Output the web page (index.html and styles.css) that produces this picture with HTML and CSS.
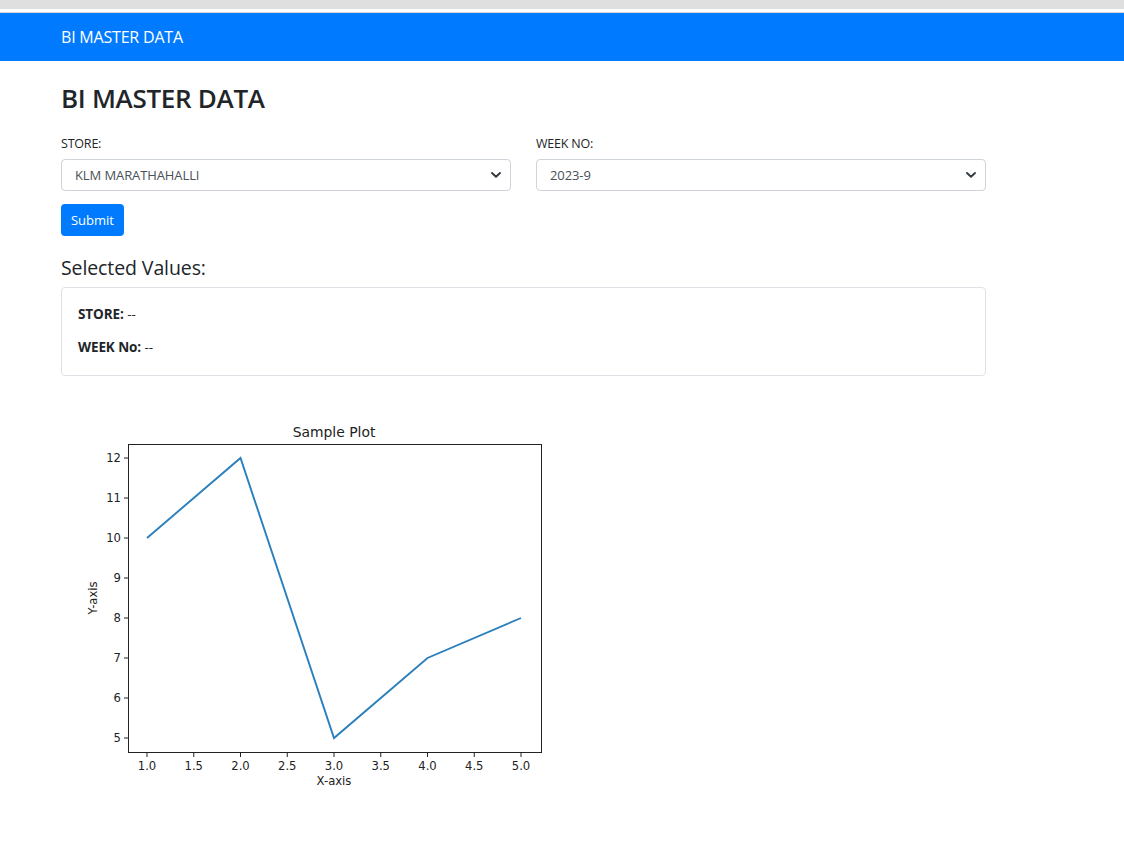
FILE: index.html
```html
<!DOCTYPE html>
<html>
<head>
<meta charset="utf-8">
<title>BI MASTER DATA</title>
<link rel="stylesheet" href="styles.css">
</head>
<body>
<div class="topstrip"></div>
<div class="topgap"></div>
<nav class="navbar"><span class="brand">BI MASTER DATA</span></nav>
<main class="container">
  <h1 class="title">BI MASTER DATA</h1>
  <form class="form">
    <div class="row">
      <div class="field">
        <label class="label">STORE:</label>
        <div class="select-wrap">
          <select class="select"><option>KLM MARATHAHALLI</option></select>
          <svg class="chev" width="12" height="8" viewBox="0 0 12 8"><path d="M2 2 L6 5.8 L10 2" fill="none" stroke="#343a40" stroke-width="1.9" stroke-linecap="round" stroke-linejoin="round"/></svg>
        </div>
      </div>
      <div class="field">
        <label class="label">WEEK NO:</label>
        <div class="select-wrap">
          <select class="select"><option>2023-9</option></select>
          <svg class="chev" width="12" height="8" viewBox="0 0 12 8"><path d="M2 2 L6 5.8 L10 2" fill="none" stroke="#343a40" stroke-width="1.9" stroke-linecap="round" stroke-linejoin="round"/></svg>
        </div>
      </div>
    </div>
    <button type="button" class="btn">Submit</button>
  </form>
  <h2 class="subtitle">Selected Values:</h2>
  <div class="card">
    <p class="val"><strong>STORE:</strong> --</p>
    <p class="val"><strong>WEEK No:</strong> --</p>
  </div>
  <div class="plot">
    <svg width="480" height="390" viewBox="0 0 480 390" font-family="'DejaVu Sans', sans-serif" fill="#222">
      <text x="254" y="27" font-size="13.9" text-anchor="middle">Sample Plot</text>
      <rect x="48.5" y="34.5" width="413" height="308" fill="none" stroke="#222" stroke-width="1"/>
      <polyline points="67,128 160.5,48 254,328 347.5,248 441,208" fill="none" stroke="#2a7fbc" stroke-width="1.9" stroke-linejoin="miter"/>
      <g stroke="#222" stroke-width="1">
        <line x1="48" y1="48" x2="44" y2="48"/>
        <line x1="48" y1="88" x2="44" y2="88"/>
        <line x1="48" y1="128" x2="44" y2="128"/>
        <line x1="48" y1="168" x2="44" y2="168"/>
        <line x1="48" y1="208" x2="44" y2="208"/>
        <line x1="48" y1="248" x2="44" y2="248"/>
        <line x1="48" y1="288" x2="44" y2="288"/>
        <line x1="48" y1="328" x2="44" y2="328"/>
        <line x1="67" y1="343" x2="67" y2="347"/>
        <line x1="113.75" y1="343" x2="113.75" y2="347"/>
        <line x1="160.5" y1="343" x2="160.5" y2="347"/>
        <line x1="207.25" y1="343" x2="207.25" y2="347"/>
        <line x1="254" y1="343" x2="254" y2="347"/>
        <line x1="300.75" y1="343" x2="300.75" y2="347"/>
        <line x1="347.5" y1="343" x2="347.5" y2="347"/>
        <line x1="394.25" y1="343" x2="394.25" y2="347"/>
        <line x1="441" y1="343" x2="441" y2="347"/>
      </g>
      <g font-size="11.6" text-anchor="end">
        <text x="41" y="52">12</text>
        <text x="41" y="92">11</text>
        <text x="41" y="132">10</text>
        <text x="41" y="172">9</text>
        <text x="41" y="212">8</text>
        <text x="41" y="252">7</text>
        <text x="41" y="292">6</text>
        <text x="41" y="332">5</text>
      </g>
      <g font-size="11.6" text-anchor="middle">
        <text x="67" y="360">1.0</text>
        <text x="113.75" y="360">1.5</text>
        <text x="160.5" y="360">2.0</text>
        <text x="207.25" y="360">2.5</text>
        <text x="254" y="360">3.0</text>
        <text x="300.75" y="360">3.5</text>
        <text x="347.5" y="360">4.0</text>
        <text x="394.25" y="360">4.5</text>
        <text x="441" y="360">5.0</text>
        <text x="254" y="375">X-axis</text>
        <text x="0" y="0" transform="translate(17 188) rotate(-90)">Y-axis</text>
      </g>
    </svg>
  </div>
</main>
</body>
</html>
```

FILE: styles.css
```css
* { box-sizing: border-box; }
html, body { margin: 0; padding: 0; background: #fff; }
body {
  font-family: "Open Sans", "Noto Sans", sans-serif;
  color: #212529;
}
.topstrip { height: 9px; background: #dfdfdf; }
.topgap { height: 4px; background: #fff; border-bottom: 1px solid #d6d6d6; }
.navbar {
  height: 48px;
  background: #007bff;
  display: flex;
  align-items: center;
  padding-left: 61px;
}
.brand { color: #fff; font-size: 16px; letter-spacing: -0.2px; }
.container { padding-left: 61px; width: 986px; }
.title {
  margin: 0;
  padding-top: 22px;
  padding-bottom: 1px;
  font-size: 26px;
  font-weight: 600;
  line-height: 30px;
  letter-spacing: -0.3px;
}
.form { margin-top: 22px; }
.row { display: flex; gap: 25px; }
.field { width: 450px; display: flex; flex-direction: column; }
.label { font-size: 12.5px; line-height: 16px; margin-bottom: 7px; letter-spacing: -0.2px; }
.select-wrap { position: relative; }
.select {
  appearance: none;
  -webkit-appearance: none;
  width: 100%;
  height: 32px;
  border: 1px solid #ced4da;
  border-radius: 4px;
  background: #fff;
  padding: 0 30px 0 13px;
  font-family: inherit;
  font-size: 13px;
  color: #495057;
  letter-spacing: -0.1px;
}
.chev { position: absolute; right: 9px; top: 12px; }
.btn {
  margin-top: 13px;
  width: 63px;
  height: 32px;
  border: 0;
  border-radius: 4px;
  background: #007bff;
  color: #fff;
  font-family: inherit;
  font-size: 13px;
  padding: 0;
}
.subtitle {
  margin: 20px 0 0;
  font-size: 19.5px;
  font-weight: 500;
  line-height: 24px;
  letter-spacing: -0.1px;
}
.card {
  margin-top: 7px;
  width: 925px;
  border: 1px solid #dee2e6;
  border-radius: 4px;
  padding: 17px 16px 18px;
  display: flex;
  flex-direction: column;
  gap: 14px;
}
.val { margin: 0; font-size: 13.5px; line-height: 19px; letter-spacing: -0.1px; }
.val strong { font-weight: 700; }
.plot { margin-top: 34px; margin-left: 19px; }
.plot svg { display: block; }
```
